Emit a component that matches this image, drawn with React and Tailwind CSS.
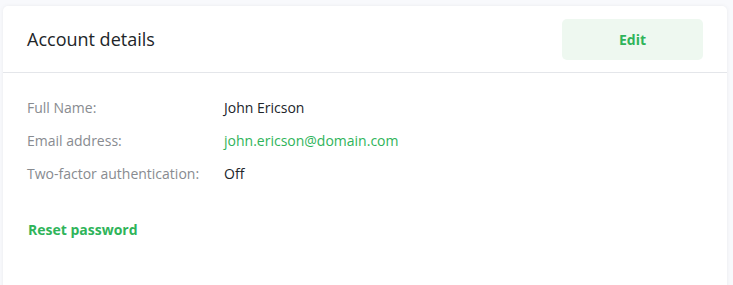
export default function App() {
  const rows = [
    ["Full Name:", "John Ericson", "text-[#212529]"],
    ["Email address:", "john.ericson@domain.com", "text-[#2fb45a]"],
    ["Two-factor authentication:", "Off", "text-[#212529]"],
  ];
  return (
    <div className="min-h-[285px] bg-[#f8f9fc] pt-[6px] pl-[3px] pr-[6px] overflow-hidden" style={{ fontFamily: '"Open Sans", sans-serif' }}>
      <div className="bg-white rounded-[5px] shadow-[0_0_4px_rgba(0,0,0,0.06)] h-[290px]">
        <div className="flex items-center justify-between h-[67px] pl-[24px] pr-[24px] border-b border-[#e4e6ea]">
          <h2 className="text-[18px] text-[#212529] leading-none">Account details</h2>
          <button className="w-[141px] h-[41px] rounded-[5px] bg-[#eef8f0] text-[#2fb45a] font-bold text-[14px]">Edit</button>
        </div>
        <div className="pl-[24px] pt-[18px]">
          {rows.map(([l, v, c]) => (
            <div key={l} className="flex h-[33px] items-center text-[14px]">
              <div className="w-[197px] text-[#888b90]">{l}</div>
              <div className={c}>{v}</div>
            </div>
          ))}
          <div className="mt-[29px] text-[14px] font-bold text-[#2fb45a] pl-[1px]">Reset password</div>
        </div>
      </div>
    </div>
  );
}
